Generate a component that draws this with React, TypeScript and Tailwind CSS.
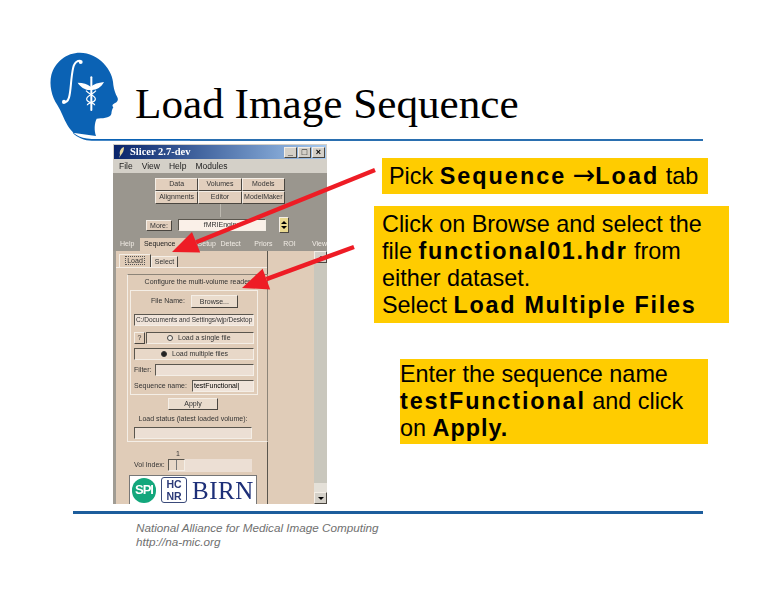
const Bevel = "border border-t-[#f4eee6] border-l-[#f4eee6] border-r-[#4a4640] border-b-[#4a4640]";
const Sunken = "border border-t-[#5a564e] border-l-[#5a564e] border-r-[#f4eee6] border-b-[#f4eee6]";

function ToolButton({ label }: { label: string }) {
  return (
    <div className={`flex-1 h-[13px] bg-[#e2cfbd] flex items-center justify-center text-[7px] text-[#333] ${Bevel}`}>
      {label}
    </div>
  );
}

function HeadLogo() {
  return (
    <svg width="160" height="110" viewBox="0 0 480 330" fill="none">
      <path
        d="M150 38 C110 38 75 65 64 105 C57 135 65 170 82 195 C95 215 100 235 112 255 C125 278 145 296 185 297 L480 297 L480 302 L185 302 C165 302 140 292 128 278 L198 288 C192 270 193 250 200 236 C215 234 240 236 244 222 C245 214 246 208 250 202 C244 196 250 192 254 190 C262 186 266 180 262 172 C256 160 252 150 250 135 C250 90 205 38 150 38 Z"
        fill="#0b62b4"
      />
      <path d="M100 188 C120 188 120 160 124 120 C128 85 130 62 150 62" stroke="#fff" strokeWidth="6" strokeLinecap="round" />
      <circle cx="152" cy="66" r="6" fill="#fff" />
      <circle cx="102" cy="185" r="6" fill="#fff" />
      <path d="M143 128 C160 128 172 132 182 140 C192 132 205 128 222 126 C214 142 200 150 186 150 L178 150 C165 150 150 140 143 128 Z" fill="#fff" />
      <path d="M184 112 L184 210" stroke="#fff" strokeWidth="6" strokeLinecap="round" />
      <path d="M168 152 C180 166 198 168 196 178 C194 190 172 186 172 196 M198 152 C186 166 168 168 170 178 C172 190 194 186 194 196" stroke="#fff" strokeWidth="3.5" />
    </svg>
  );
}

function SlicerWindow() {
  return (
    <div className="absolute left-[113px] top-[144px] w-[214px] h-[360px] flex flex-col bg-[#d4d0c8] blur-[0.5px] font-['Liberation_Sans',sans-serif] overflow-hidden">
      <div className="h-[14px] shrink-0 mx-[1px] mt-[1px] bg-gradient-to-r from-[#0a246a] to-[#a6caf0] flex items-center pl-[4px] gap-[5px]">
        <svg width="7" height="11" viewBox="0 0 7 11">
          <path d="M6 0 C3 1 1 4 2 8 L1 11 L3 8 C5 6 6 3 6 0 Z" fill="#e8d9a0" />
        </svg>
        <span className="text-[10.5px] font-bold text-white font-['Liberation_Serif',serif] whitespace-nowrap">Slicer 2.7-dev</span>
        <div className="ml-auto flex gap-[1px] mr-[1px]">
          {["_", "□", "×"].map((c) => (
            <div key={c} className={`w-[13px] h-[11px] bg-[#d4d0c8] text-[9px] leading-[9px] text-black text-center font-bold ${Bevel}`}>
              {c}
            </div>
          ))}
        </div>
      </div>
      <div className="h-[14px] shrink-0 flex items-center gap-[9px] pl-[6px] text-[8.5px] text-[#222]">
        <span>File</span>
        <span>View</span>
        <span>Help</span>
        <span>Modules</span>
      </div>
      <div className="h-[65px] shrink-0 bg-[#9a968e] flex flex-col">
        <div className="w-[130px] ml-[42px] mt-[5px] flex flex-col">
          <div className="flex">
            <ToolButton label="Data" />
            <ToolButton label="Volumes" />
            <ToolButton label="Models" />
          </div>
          <div className="flex">
            <ToolButton label="Alignments" />
            <ToolButton label="Editor" />
            <ToolButton label="ModelMaker" />
          </div>
        </div>
        <div className="w-[1px] h-[13px] bg-[#bdb9b0] ml-[107px]" />
        <div className="flex items-center ml-[33px]">
          <div className={`w-[26px] h-[11px] bg-[#e2cfbd] text-[7px] text-[#333] text-center leading-[9px] ${Bevel}`}>More:</div>
          <div className={`ml-[6px] w-[88px] h-[12px] bg-[#faf0e8] text-[7px] text-[#333] text-center leading-[10px] ${Sunken}`}>fMRIEngine</div>
          <div className={`ml-[13px] w-[10px] h-[16px] bg-[#e8d890] flex flex-col items-center justify-center gap-[2px] ${Bevel}`}>
            <div className="w-0 h-0 border-x-[3px] border-x-transparent border-b-[3px] border-b-black" />
            <div className="w-0 h-0 border-x-[3px] border-x-transparent border-t-[3px] border-t-black" />
          </div>
        </div>
      </div>
      <div className="h-[13px] shrink-0 bg-[#9a968e] flex text-[7px] text-[#f0ebe4] items-center">
        <span className="w-[27px] pl-[7px]">Help</span>
        <div className="w-[50px] h-full bg-[#e0ccb8] text-[#222] flex items-center pl-[4px]">Sequence</div>
        <span className="w-[29px] pl-[8px]">Setup</span>
        <span className="w-[35px] pl-[2px]">Detect</span>
        <span className="w-[30px] pl-[1px]">Priors</span>
        <span className="w-[29px]">ROI</span>
        <span>View</span>
      </div>
      <div className="flex-1 flex min-h-0">
        <div className="flex-1 bg-[#e0ccb8] border-l-[3px] border-[#a09c94] flex min-w-0">
          <div className="w-[152px] flex flex-col text-[7px] text-[#333] border-r border-[#5a564e]">
            <div className="flex pl-[3px] h-[17px] shrink-0 items-end border-b border-[#f4eee6]">
              <div className={`w-[32px] h-[13px] text-center leading-[11px] ${Bevel} border-b-0`}>
                <span className="border border-dotted border-[#555] px-[1px]">Load</span>
              </div>
              <div className={`w-[27px] h-[11px] text-center leading-[9px] bg-[#e8d8c8] ${Bevel} border-b-0`}>Select</div>
            </div>
            <div className="mt-[6px] w-[141px] ml-[11px] flex flex-col shrink-0 border border-[#8c8478] border-b-[#f4eee6] border-l-[#f4eee6]">
              <div className="h-[15px] flex items-center justify-center whitespace-nowrap">Configure the multi-volume reader</div>
              <div className="ml-[2px] w-[128px] flex flex-col h-[105px] border border-[#f4eee6]">
                <div className="h-[20px] flex items-center shrink-0">
                  <span className="ml-[20px] text-[7px] whitespace-nowrap">File Name:</span>
                  <div className={`ml-[6px] w-[47px] h-[13px] bg-[#eadccd] text-center leading-[11px] ${Bevel}`}>Browse...</div>
                </div>
                <div className={`mt-[3px] mx-[3px] h-[12px] bg-[#f0e4da] text-[6.5px] leading-[10px] overflow-hidden whitespace-nowrap pl-[1px] shrink-0 ${Sunken}`}>C:/Documents and Settings/wjp/Desktop</div>
                <div className="flex mt-[6px] mx-[3px] h-[12px] shrink-0">
                  <div className={`w-[11px] h-[12px] text-center leading-[10px] ${Bevel}`}>?</div>
                  <div className={`flex-1 ml-[1px] flex items-center pl-[20px] gap-[5px] whitespace-nowrap bg-[#e8d8c8] ${Sunken}`}>
                    <div className="w-[6px] h-[6px] rounded-full border border-[#444] bg-[#f4eee6]" />
                    Load a single file
                  </div>
                </div>
                <div className={`mx-[3px] mt-[4px] h-[12px] shrink-0 flex items-center pl-[26px] gap-[5px] whitespace-nowrap bg-[#e8d8c8] ${Sunken}`}>
                  <div className="w-[6px] h-[6px] rounded-full border border-[#333] bg-[#222]" />
                  Load multiple files
                </div>
                <div className="flex items-center mt-[4px] mx-[3px] h-[12px] shrink-0">
                  <span>Filter:</span>
                  <div className={`flex-1 ml-[3px] h-[12px] bg-[#ecdfd4] ${Sunken}`} />
                </div>
                <div className="flex items-center mt-[4px] mx-[3px] h-[12px] shrink-0">
                  <span className="whitespace-nowrap">Sequence name:</span>
                  <div className={`flex-1 ml-[5px] h-[12px] bg-[#f0e4da] leading-[10px] text-black pl-[1px] whitespace-nowrap overflow-hidden ${Sunken}`}>testFunctional|</div>
                </div>
              </div>
              <div className="ml-[2px] w-[126px] flex flex-col items-center pt-[3px] pb-[2px]">
                <div className={`w-[50px] h-[12px] text-center leading-[10px] bg-[#eadccd] shrink-0 ${Bevel}`}>Apply</div>
                <div className="mt-[4px] h-[10px] leading-[10px] text-[7px] whitespace-nowrap">Load status (latest loaded volume):</div>
                <div className={`mt-[3px] w-[118px] h-[12px] bg-[#ecdfd4] shrink-0 ${Sunken}`} />
              </div>
            </div>
            <div className="h-[13px] mt-[17px] shrink-0 flex items-center ml-[18px]">
              <span className="w-[34px] whitespace-nowrap">Vol Index:</span>
              <div className="relative w-[84px] h-[13px] bg-[#ecdfd4]">
                <div className={`w-[17px] h-[12px] bg-[#e8d8c8] flex justify-center ${Sunken}`}>
                  <div className="w-[1px] h-full bg-[#777]" />
                </div>
                <span className="absolute left-[8px] top-[-10px]">1</span>
              </div>
            </div>
            <div className="mt-[3px] ml-[13px] w-[128px] flex-1 bg-white flex items-center border-t border-x border-[#777] pl-[2px] overflow-hidden">
              <div className="w-[24px] h-[25px] shrink-0 rounded-full bg-[#13a77c] text-white text-[13px] font-bold flex items-center justify-center tracking-[-1px]">SPI</div>
              <div className="ml-[5px] w-[26px] h-[26px] shrink-0 rounded-[3px] border border-[#3a4a7a] text-[#2c3a78] text-[10.5px] leading-[12px] font-bold flex flex-col items-center justify-center">
                <span>HC</span>
                <span>NR</span>
              </div>
              <span className="ml-[5px] text-[#1d2f78] text-[25px] leading-none font-['Liberation_Serif',serif] tracking-[0.5px]">BIRN</span>
            </div>
          </div>
          <div className="flex-1" />
        </div>
        <div className="w-[13px] shrink-0 bg-[#c9c7bd] flex flex-col justify-between">
          <div className={`h-[12px] bg-[#d4d0c8] flex items-center justify-center ${Bevel}`}>
            <div className="w-0 h-0 border-x-[3px] border-x-transparent border-b-[3px] border-b-black" />
          </div>
          <div className="flex flex-col">
            <div className="h-[9px] bg-[#e4e0d8]" />
            <div className={`h-[12px] bg-[#d4d0c8] flex items-center justify-center ${Bevel}`}>
              <div className="w-0 h-0 border-x-[3px] border-x-transparent border-t-[3px] border-t-black" />
            </div>
          </div>
        </div>
      </div>
    </div>
  );
}

function Arrow({ x1, y1, x2, y2 }: { x1: number; y1: number; x2: number; y2: number }) {
  const a = Math.atan2(y2 - y1, x2 - x1);
  const len = 26;
  const half = 11;
  const bx = x2 - Math.cos(a) * len;
  const by = y2 - Math.sin(a) * len;
  const px = -Math.sin(a) * half;
  const py = Math.cos(a) * half;
  return (
    <>
      <line x1={x1} y1={y1} x2={bx} y2={by} stroke="#ee1c25" strokeWidth="4.5" />
      <polygon points={`${x2},${y2} ${bx + px},${by + py} ${bx - px},${by - py}`} fill="#ee1c25" />
    </>
  );
}

export default function App() {
  return (
    <div className="relative w-[776px] h-[600px] bg-white overflow-hidden font-['Liberation_Sans',sans-serif] text-black">
      <div className="absolute left-[30px] top-[40px]">
        <HeadLogo />
      </div>
      <div className="absolute left-[190px] top-[139px] w-[513px] h-[2px] bg-[#2a6fb0]" />
      <h1 className="absolute left-[135px] top-[79px] text-[43.2px] leading-[50px] whitespace-nowrap font-['Liberation_Serif',serif]">
        Load Image Sequence
      </h1>
      <SlicerWindow />
      <svg className="absolute left-0 top-0 pointer-events-none" width="776" height="600">
        <Arrow x1={375} y1={170} x2={172} y2={252} />
        <Arrow x1={354} y1={247} x2={242} y2={288} />
      </svg>
      <div className="absolute left-[382px] top-[158px] w-[326px] h-[36px] bg-[#ffcc00] pl-[7px] text-[23.4px] leading-[36px] whitespace-nowrap">
        Pick <b className="tracking-[2px]">Sequence</b> <span className="font-['DejaVu_Sans',sans-serif] text-[27px] leading-[20px]">→</span><b className="tracking-[2px]">Load</b> tab
      </div>
      <div className="absolute left-[374px] top-[206px] w-[355px] h-[117px] bg-[#ffcc00] pl-[8px] pt-[5px] text-[23.4px] leading-[27px] whitespace-nowrap">
        Click on Browse and select the
        <br />
        file <b className="tracking-[1.7px]">functional01.hdr</b> from
        <br />
        either dataset.
        <br />
        Select <b className="tracking-[1.7px]">Load Multiple Files</b>
      </div>
      <div className="absolute left-[400px] top-[359px] w-[308px] h-[85px] bg-[#ffcc00] pt-[2px] text-[23.4px] leading-[27px] whitespace-nowrap">
        Enter the sequence name
        <br />
        <b className="tracking-[1.85px]">testFunctional</b> and click
        <br />
        on <b className="tracking-[1px]">Apply.</b>
      </div>
      <div className="absolute left-[73px] top-[511px] w-[630px] h-[3px] bg-[#1d5d9c]" />
      <div className="absolute left-[136px] top-[521px] text-[11.7px] leading-[14px] italic text-[#707070] whitespace-nowrap">
        National Alliance for Medical Image Computing
        <br />
        http://na-mic.org
      </div>
    </div>
  );
}
